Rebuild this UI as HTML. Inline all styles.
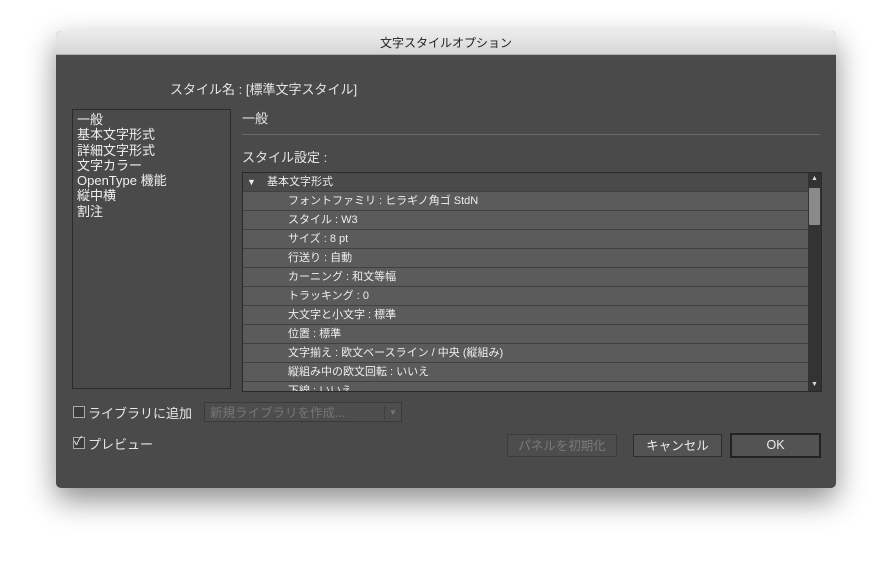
<!DOCTYPE html>
<html><head><meta charset="utf-8"><style>
body{margin:0;width:892px;height:569px;background:#fff;position:relative;font-family:"Liberation Sans","Noto Sans CJK JP",sans-serif;overflow:hidden}
.dlg{position:absolute;left:56px;top:31px;width:780px;height:457px;background:#4a4a4a;border-radius:5px;box-shadow:0 12px 30px rgba(0,0,0,.45);overflow:hidden}
.tb{height:23px;background:linear-gradient(#ececec,#d6d6d6);border-bottom:1px solid #b0b0b0;text-align:center;font-size:12px;line-height:24px;color:#222}
.a{position:absolute;color:#e6e6e6}
.list{position:absolute;left:16px;top:78px;width:159px;height:280px;border:1px solid #2b2b2b;background:#4a4a4a;font-size:13px;line-height:15.3px;color:#f0f0f0;padding:2px 4px;box-sizing:border-box}
.tree{position:absolute;left:186px;top:141px;width:578px;height:218px;border:1px solid #2a2a2a;background:#3d3d3d;overflow:hidden;font-size:11px;color:#eee}
.row{height:18px;line-height:18px;background:#5b5b5b;border-bottom:1px solid #404040;padding-left:45px;width:565px;box-sizing:content-box;position:relative}
.row{width:520px}
.row.h{background:#4a4a4a;padding-left:24px;width:541px}
.sb{position:absolute;right:0;top:0;width:13px;height:218px;background:#333}
.btn{position:absolute;height:23px;border:1px solid #2e2e2e;background:#535353;color:#eee;font-size:12.5px;text-align:center;line-height:23px;box-sizing:border-box}
.cb{position:absolute;width:10px;height:10px;border:1px solid #aaa;background:#3c3c3c}
</style></head><body>
<div class="dlg">
<div class="tb">文字スタイルオプション</div>
<div class="a" style="left:114px;top:48px;font-size:13px">スタイル名 : [標準文字スタイル]</div>
<div class="list">一般<br>基本文字形式<br>詳細文字形式<br>文字カラー<br>OpenType 機能<br>縦中横<br>割注</div>
<div class="a" style="left:186px;top:77px;font-size:13px">一般</div>
<div style="position:absolute;left:186px;top:103px;width:578px;height:1px;background:#6a6a6a"></div>
<div class="a" style="left:186px;top:116px;font-size:13px">スタイル設定 :</div>
<div class="tree">
<div class="row h"><span style="position:absolute;left:4px;font-size:9px">▼</span>基本文字形式</div>
<div class="row">フォントファミリ : ヒラギノ角ゴ StdN</div>
<div class="row">スタイル : W3</div>
<div class="row">サイズ : 8 pt</div>
<div class="row">行送り : 自動</div>
<div class="row">カーニング : 和文等幅</div>
<div class="row">トラッキング : 0</div>
<div class="row">大文字と小文字 : 標準</div>
<div class="row">位置 : 標準</div>
<div class="row">文字揃え : 欧文ベースライン / 中央 (縦組み)</div>
<div class="row">縦組み中の欧文回転 : いいえ</div>
<div class="row">下線 : いいえ</div>
<div class="sb"><div style="color:#ddd;font-size:7px;text-align:center;line-height:12px">▲</div><div style="position:absolute;left:1px;top:15px;width:11px;height:37px;background:#8a8a8a;border-radius:1px"></div><div style="position:absolute;bottom:0;width:13px;color:#ddd;font-size:7px;text-align:center;line-height:12px">▼</div></div>
</div>
<div class="cb" style="left:17px;top:375px"></div>
<div class="a" style="left:32px;top:372px;font-size:13px">ライブラリに追加</div>
<div style="position:absolute;left:148px;top:371px;width:198px;height:20px;border:1px solid #3a3a3a;background:#4d4d4d;color:#777;font-size:12.5px;line-height:20px;padding-left:5px;box-sizing:border-box">新規ライブラリを作成...<span style="position:absolute;right:0;top:3px;width:16px;height:13px;border-left:1px solid #3e3e3e;font-size:8px;text-align:center;line-height:13px">▼</span></div>
<div class="cb" style="left:17px;top:406px"></div>
<div class="a" style="left:18px;top:401px;font-size:12px;color:#eee">✓</div>
<div class="a" style="left:32px;top:403px;font-size:13px">プレビュー</div>
<div class="btn" style="left:451px;top:403px;width:110px;color:#7a7a7a;background:#4d4d4d;border-color:#3c3c3c">パネルを初期化</div>
<div class="btn" style="left:577px;top:403px;width:89px">キャンセル</div>
<div class="btn" style="left:674px;top:402px;width:91px;height:25px;border:2px solid #222;line-height:21px">OK</div>
</div>
</body></html>
